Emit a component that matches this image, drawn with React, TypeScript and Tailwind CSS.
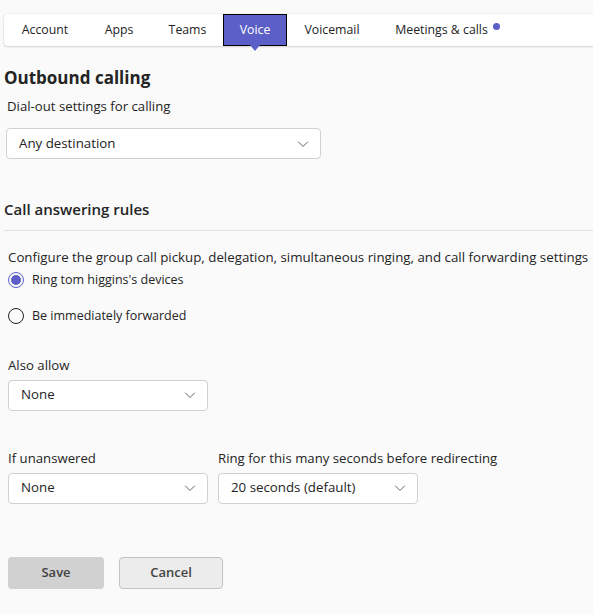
import { useState } from "react";

const tabs = [
  { label: "Account", width: "w-[82px]" },
  { label: "Apps", width: "w-[66px]" },
  { label: "Teams", width: "w-[71px]" },
  { label: "Voice", width: "w-[64px]" },
  { label: "Voicemail", width: "w-[90px]" },
  { label: "Meetings & calls", width: "w-[141px]" },
];

const Chevron = () => (
  <svg width="12" height="12" viewBox="0 0 12 12" fill="none" className="text-[#616161]">
    <path d="M1.5 4l4.5 4.5L10.5 4" stroke="currentColor" strokeWidth="1" strokeLinecap="round" strokeLinejoin="round" />
  </svg>
);

interface SelectProps {
  value: string;
  width: string;
}

const Select: React.FC<SelectProps> = ({ value, width }) => (
  <div
    className={`${width} h-[31px] bg-white border border-[#d1d1d1] rounded-[4px] flex items-center justify-between pl-3 pr-[11px] text-[13.3px] text-[#242424]`}
  >
    <span>{value}</span>
    <Chevron />
  </div>
);

interface RadioProps {
  label: string;
  checked: boolean;
  onSelect: () => void;
}

const Radio: React.FC<RadioProps> = ({ label, checked, onSelect }) => (
  <div onClick={onSelect} className="flex items-center gap-2 cursor-pointer pl-2">
    <div
      className={`w-4 h-4 rounded-full border flex items-center justify-center ${
        checked ? "border-[#5b5fc7]" : "border-[#242424]"
      }`}
    >
      {checked && <div className="w-[10px] h-[10px] rounded-full bg-[#5b5fc7]" />}
    </div>
    <span className="text-[12.5px] text-[#242424]">{label}</span>
  </div>
);

export default function App() {
  const [ring, setRing] = useState(true);

  return (
    <div className="min-h-[614px] bg-[#fafafa] pt-[14px] font-['Open_Sans',sans-serif] text-[#242424] overflow-hidden">
      {/* tab strip */}
      <div className="ml-1 h-8 bg-white rounded-l-[4px] shadow-[0_1px_2px_rgba(0,0,0,0.14),0_0_2px_rgba(0,0,0,0.12)] flex items-stretch text-[12.3px] whitespace-nowrap">
        {tabs.map(({ label, width }) => {
          const active = label === "Voice";
          return (
            <div
              key={label}
              className={`relative flex items-center justify-center ${width} ${
                active ? "bg-[#5b5fc7] text-white border border-black" : "text-[#242424]"
              }`}
            >
              {label}
              {label === "Meetings & calls" && (
                <span className="ml-[5px] -mt-[8px] w-[7px] h-[7px] rounded-full bg-[#5b5fc7]" />
              )}
              {active && (
                <span className="absolute left-1/2 -translate-x-1/2 top-full w-0 h-0 border-x-[5px] border-x-transparent border-t-[6px] border-t-[#5b5fc7]" />
              )}
            </div>
          );
        })}
      </div>

      {/* outbound calling */}
      <div className="pl-1 mt-[20px]">
        <div className="text-[17px] font-bold leading-6">Outbound calling</div>
        <div className="pl-[3px] mt-[6px] text-[13.2px] leading-5">Dial-out settings for calling</div>
        <div className="pl-[2px] mt-[12px]">
          <Select value="Any destination" width="w-[315px]" />
        </div>
      </div>

      {/* call answering rules */}
      <div className="mt-[38px]">
        <div className="pl-1 text-[15px] font-semibold leading-6">Call answering rules</div>
        <div className="ml-1 mt-[9px] border-t border-[#e0e0e0]" />
        <div className="pl-2 mt-[16px] text-[13.3px] leading-5 whitespace-nowrap">
          Configure the group call pickup, delegation, simultaneous ringing, and call forwarding settings
        </div>
        <div className="mt-[4px] flex flex-col gap-[17px]">
          <Radio label="Ring tom higgins's devices" checked={ring} onSelect={() => setRing(true)} />
          <Radio label="Be immediately forwarded" checked={!ring} onSelect={() => setRing(false)} />
        </div>
      </div>

      <div className="pl-2 mt-[29px]">
        <div className="text-[13.2px] leading-5">Also allow</div>
        <div className="mt-[5px]">
          <Select value="None" width="w-[200px]" />
        </div>
      </div>

      <div className="pl-2 mt-[37px] flex gap-[10px]">
        <div>
          <div className="text-[13.2px] leading-5">If unanswered</div>
          <div className="mt-[5px]">
            <Select value="None" width="w-[200px]" />
          </div>
        </div>
        <div>
          <div className="text-[13.2px] leading-5 whitespace-nowrap">Ring for this many seconds before redirecting</div>
          <div className="mt-[5px]">
            <Select value="20 seconds (default)" width="w-[200px]" />
          </div>
        </div>
      </div>

      <div className="pl-2 mt-[53px] flex gap-[15px]">
        <button className="w-[96px] h-8 rounded-[4px] bg-[#d1d1d1] text-[13px] font-semibold text-[#424242]">
          Save
        </button>
        <button className="w-[104px] h-8 rounded-[4px] bg-[#ececec] border border-[#c2c2c2] text-[13px] font-semibold text-[#424242]">
          Cancel
        </button>
      </div>
    </div>
  );
}
